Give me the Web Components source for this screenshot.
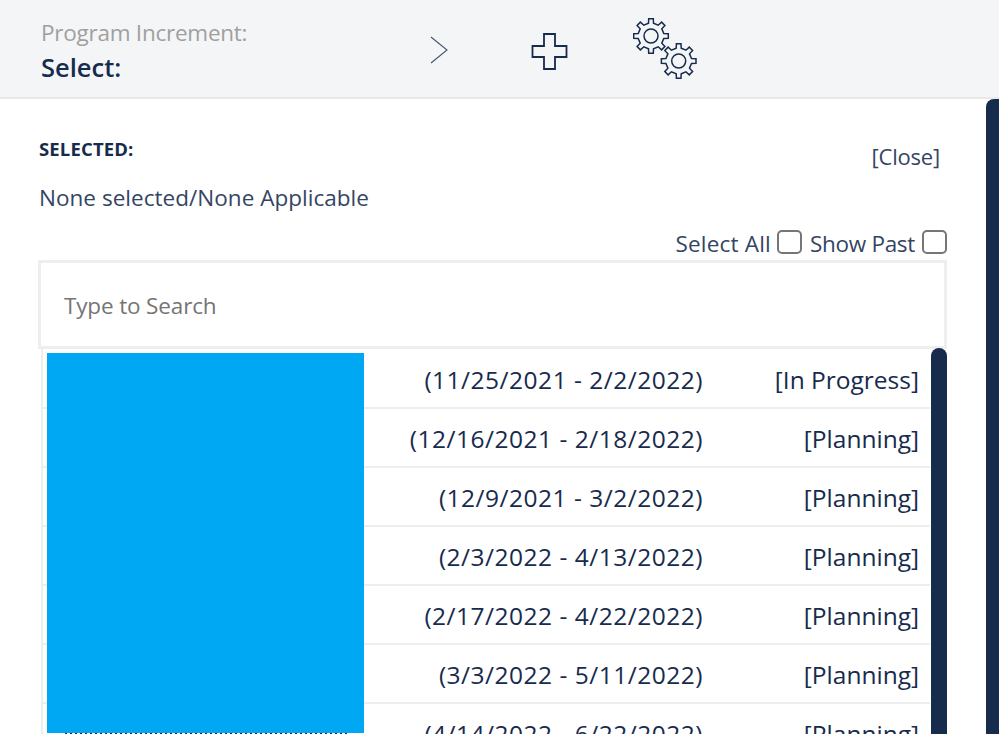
<!DOCTYPE html>
<html lang="en">
<head>
<meta charset="utf-8">
<title>Program Increment</title>
<style>
  html, body { margin: 0; height: 100%; overflow: hidden; background: #fff; }
  body { font-family: "Open Sans", "Noto Sans", sans-serif; color: #172b4d; }
</style>
</head>
<body>
<pi-page>
  <pi-header slot="header" label="Program Increment:" value="Select:"></pi-header>
  <pi-selected heading="SELECTED:" text="None selected/None Applicable"></pi-selected>
  <pi-search placeholder="Type to Search"></pi-search>
  <pi-list>
    <pi-row dates="(11/25/2021 - 2/2/2022)" status="[In Progress]"></pi-row>
    <pi-row dates="(12/16/2021 - 2/18/2022)" status="[Planning]"></pi-row>
    <pi-row dates="(12/9/2021 - 3/2/2022)" status="[Planning]"></pi-row>
    <pi-row dates="(2/3/2022 - 4/13/2022)" status="[Planning]"></pi-row>
    <pi-row dates="(2/17/2022 - 4/22/2022)" status="[Planning]"></pi-row>
    <pi-row dates="(3/3/2022 - 5/11/2022)" status="[Planning]"></pi-row>
    <pi-row dates="(4/14/2022 - 6/22/2022)" status="[Planning]"></pi-row>
  </pi-list>
</pi-page>

<script>
// tandwiel als pad, rond (cx, cy)
function gearPath(cx, cy, rOut, rIn, teeth) {
  const step = Math.PI * 2 / teeth
  let d = ''
  for (let i = 0; i < teeth; i++) {
    const a = i * step - Math.PI / 2
    const pts = [
      [rIn, a - step * 0.25], [rOut, a - step * 0.17],
      [rOut, a + step * 0.17], [rIn, a + step * 0.25]
    ]
    pts.forEach(([r, t], n) => {
      const x = (cx + r * Math.cos(t)).toFixed(1)
      const y = (cy + r * Math.sin(t)).toFixed(1)
      d += (i === 0 && n === 0 ? 'M' : 'L') + x + ' ' + y + ' '
    })
  }
  return d + 'Z'
}

class PiPage extends HTMLElement {
  constructor() {
    super()
    this.attachShadow({ mode: 'open' })
    this.shadowRoot.innerHTML = `
      <style>
        :host { display: flex; flex-direction: column; height: 734px; overflow: hidden; }
        .body { flex: 1; min-height: 0; display: flex; }
        .content { flex: 1; min-width: 0; padding: 0 39px 0 38px; }
        .bar { width: 13px; background: #172b4d; border-radius: 8px 0 0 0; }
      </style>
      <slot name="header"></slot>
      <div class="body">
        <div class="content"><slot></slot></div>
        <div class="bar"></div>
      </div>
    `
  }
}

class PiHeader extends HTMLElement {
  constructor() {
    super()
    this.attachShadow({ mode: 'open' })
  }
  connectedCallback() {
    this.shadowRoot.innerHTML = `
      <style>
        :host { display: flex; align-items: flex-start; height: 97px; padding-left: 41px; background: #f4f5f7; border-bottom: 2px solid #e9e9e9; box-sizing: content-box; }
        .title { width: 389px; padding-top: 18px; }
        .label { font-size: 22.500px; line-height: 30px; color: #a09f9f; letter-spacing: -0.25px; }
        .value { font-size: 25.500px; line-height: 38px; font-weight: 600; color: #172b4d; }
        svg { display: block; fill: none; stroke: #172b4d; }
        .chev { margin-top: 36px; }
        .plus { margin: 32px 0 0 83px; }
        .gears { margin: 15px 0 0 64px; }
      </style>
      <div class="title">
        <div class="label">${this.getAttribute('label')}</div>
        <div class="value">${this.getAttribute('value')}</div>
      </div>
      <svg class="chev" width="18" height="28" viewBox="0 0 18 28"><path d="M1 1 L17 14 L1 27" stroke-width="1.1" stroke="#44546f"/></svg>
      <svg class="plus" width="38" height="38" viewBox="0 0 38 38"><path d="M13 2 H24 V14 H35.500 V25 H24 V37 H13 V25 H1.500 V14 H13 Z" stroke-width="1.800"/></svg>
      <svg class="gears" width="66" height="66" viewBox="0 0 66 66" stroke-width="1.500">
        <path d="${gearPath(18, 21, 17.5, 13, 8)}"/>
        <circle cx="18" cy="21" r="7"/>
        <path d="${gearPath(45.7, 46, 17.5, 13, 8)}"/>
        <circle cx="45.7" cy="46" r="7"/>
      </svg>
    `
  }
}

class PiSelected extends HTMLElement {
  constructor() {
    super()
    this.attachShadow({ mode: 'open' })
  }
  connectedCallback() {
    this.shadowRoot.innerHTML = `
      <style>
        :host { display: block; height: 161px; color: #344563; }
        .top { display: flex; justify-content: space-between; padding: 36px 7px 0 1px; }
        h4 { margin: 0; font-size: 18.500px; line-height: 28px; font-weight: 700; color: #172b4d; letter-spacing: 0.15px; }
        .close { font-size: 22px; line-height: 28px; margin-top: 7px; letter-spacing: -0.2px; }
        .text { font-size: 22.500px; line-height: 30px; margin: 13px 0 0 1px; letter-spacing: 0.03px; }
        .opts { display: flex; justify-content: flex-end; align-items: center; margin-top: 14px; font-size: 22.500px; line-height: 30px; }
        .all { letter-spacing: 0.2px; margin-right: 6px; }
        .past { letter-spacing: -0.3px; margin: 0 7px 0 8px; }
        .opts span { position: relative; top: 2px; }
        .opts .box { top: 0; width: 21px; height: 20px; border: 2px solid #767676; border-radius: 5px; background: #fff; }
      </style>
      <div class="top"><h4>${this.getAttribute('heading')}</h4><span class="close">[Close]</span></div>
      <div class="text">${this.getAttribute('text')}</div>
      <div class="opts">
        <span class="all">Select All</span><span class="box"></span>
        <span class="past">Show Past</span><span class="box"></span>
      </div>
    `
  }
}

class PiSearch extends HTMLElement {
  constructor() {
    super()
    this.attachShadow({ mode: 'open' })
  }
  connectedCallback() {
    this.shadowRoot.innerHTML = `
      <style>
        :host { display: block; }
        input { display: block; width: 100%; height: 89px; box-sizing: border-box; border: 3px solid #eeeeee; padding: 2px 23px 0; outline: none; font: inherit; font-size: 22.500px; letter-spacing: -0.15px; background: #fff; }
        input::placeholder { color: #757575; opacity: 1; }
      </style>
      <input type="text" placeholder="${this.getAttribute('placeholder')}">
    `
  }
}

class PiList extends HTMLElement {
  constructor() {
    super()
    this.attachShadow({ mode: 'open' })
    this.shadowRoot.innerHTML = `
      <style>
        :host { display: flex; position: relative; margin: -1px 0 0 3px; height: 386px; overflow: hidden; }
        .rows { flex: 1; min-width: 0; border-left: 2px solid #eeeeee; padding-top: 2px; }
        .thumb { width: 16px; margin-left: 1px; background: #172b4d; border-radius: 8px 8px 0 0; }
        /* afgeschermde namen: ligt over de rijen */
        .redact { position: absolute; left: 6px; top: 5px; width: 317px; height: 380px; background: #00a8f4; }
        .specks { position: absolute; left: 24px; top: 384px; width: 282px; height: 2px; background: repeating-linear-gradient(90deg, #172b4d 0 2px, #fff 2px 5px); }
      </style>
      <div class="rows"><slot></slot></div>
      <div class="thumb"></div>
      <div class="specks"></div>
      <div class="redact"></div>
    `
  }
}

class PiRow extends HTMLElement {
  constructor() {
    super()
    this.attachShadow({ mode: 'open' })
  }
  connectedCallback() {
    this.shadowRoot.innerHTML = `
      <style>
        :host { display: flex; align-items: center; height: 59px; box-sizing: border-box; border-bottom: 2px solid #eeeeee; padding: 2px 11px 0 0; font-size: 24.500px; color: #172b4d; white-space: nowrap; }
        .dates { width: 660px; text-align: right; letter-spacing: 0.5px; }
        .status { flex: 1; text-align: right; }
      </style>
      <span class="dates">${this.getAttribute('dates')}</span>
      <span class="status">${this.getAttribute('status')}</span>
    `
  }
}

customElements.define('pi-page', PiPage)
customElements.define('pi-header', PiHeader)
customElements.define('pi-selected', PiSelected)
customElements.define('pi-search', PiSearch)
customElements.define('pi-list', PiList)
customElements.define('pi-row', PiRow)
</script>
</body>
</html>
